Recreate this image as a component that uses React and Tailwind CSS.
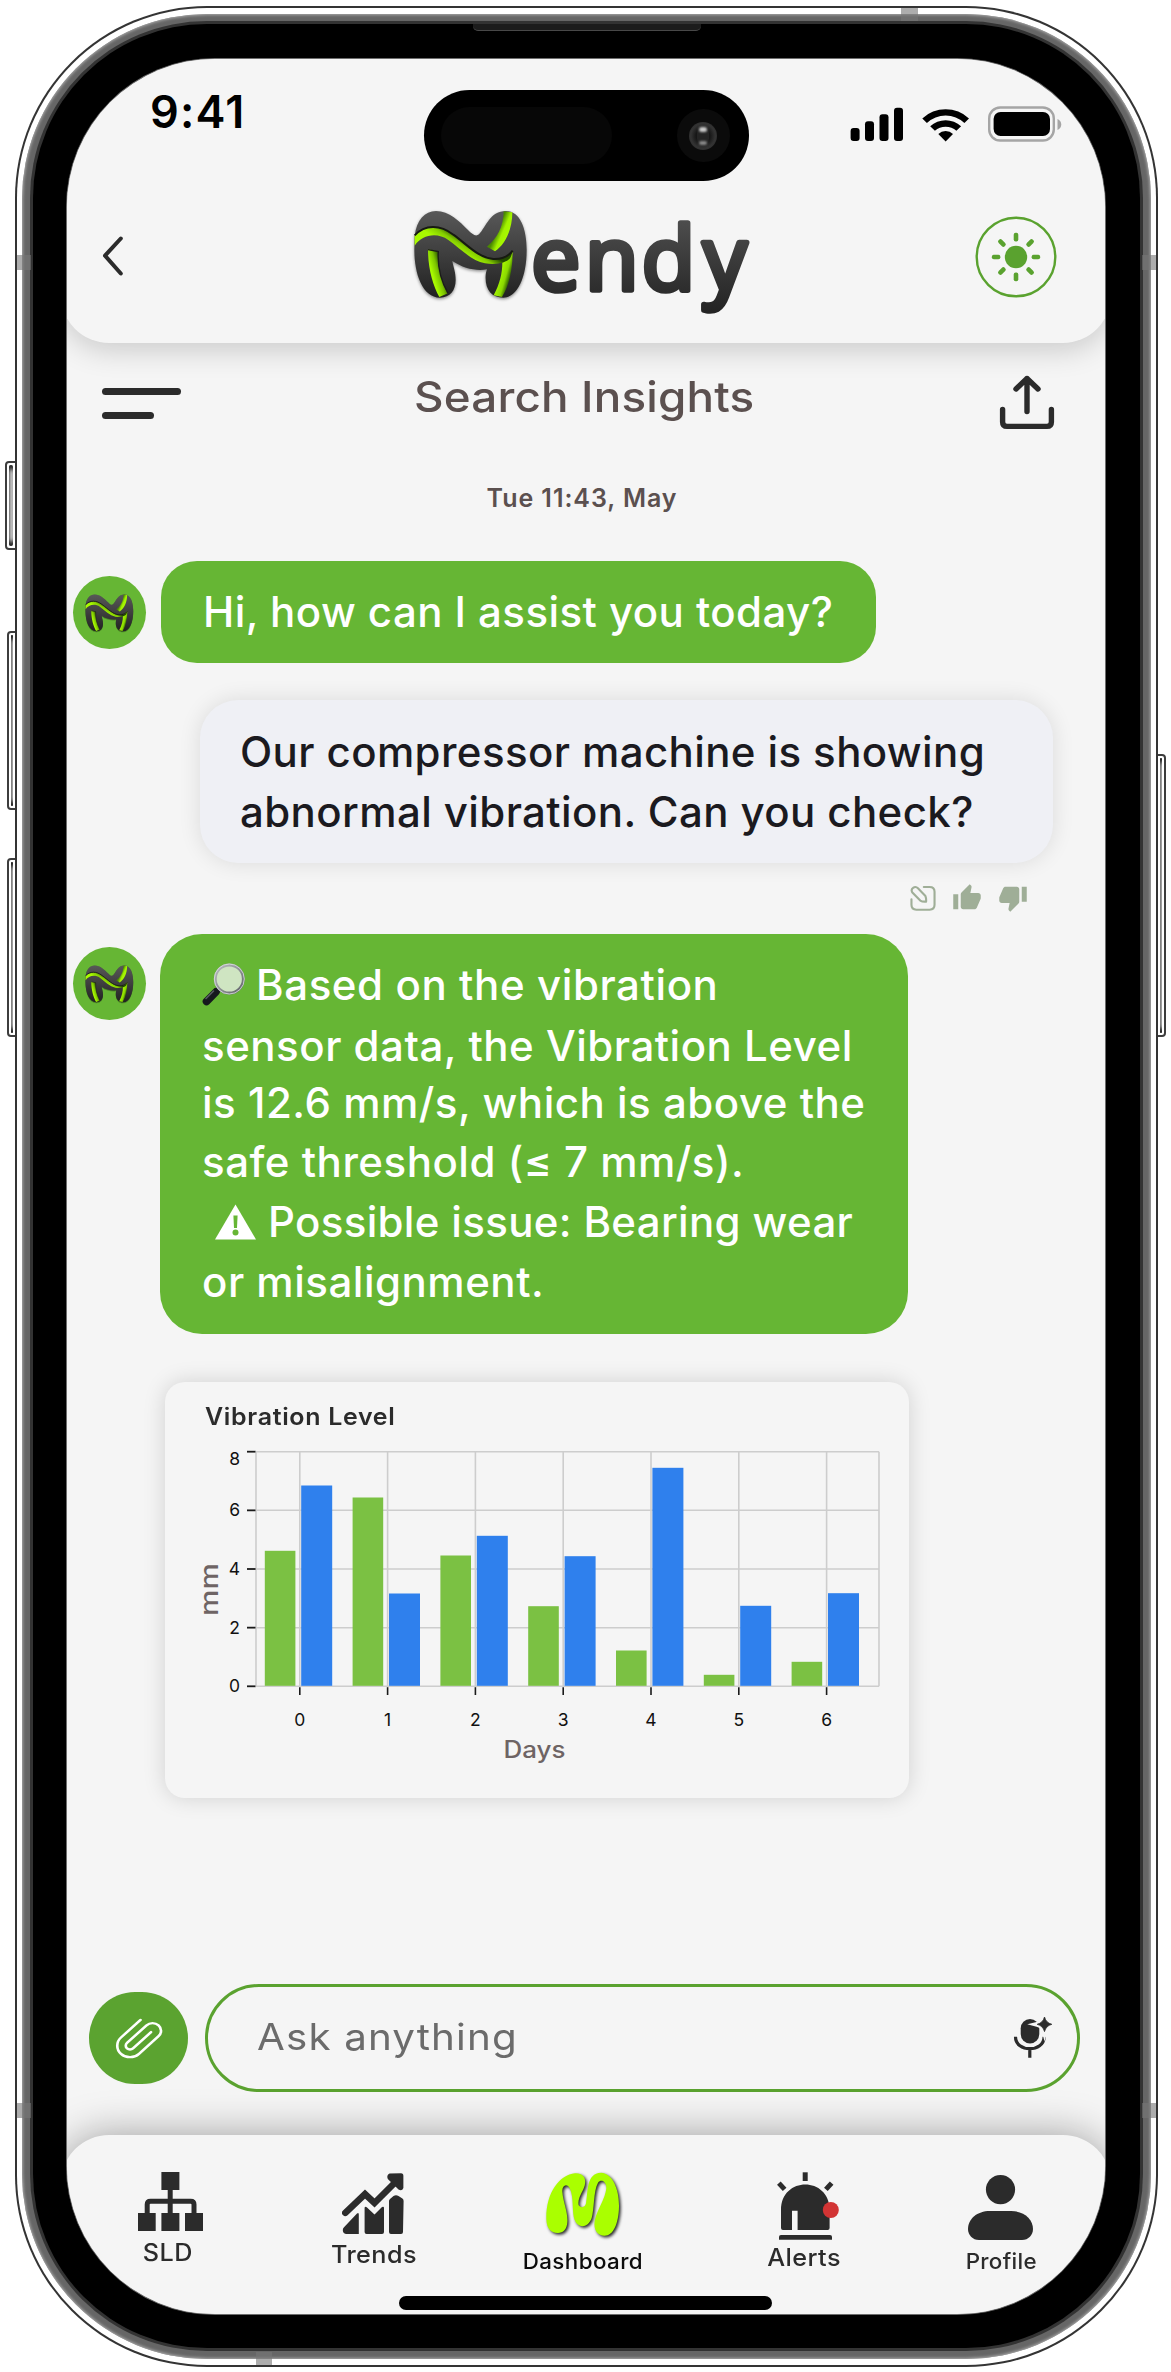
import React from "react";
import { MdThumbUp, MdThumbDown } from "react-icons/md";

const GRAPHITE = "#2b2b2b";

/* The letter M of the wordmark, also used alone as the assistant avatar. */
function LogoM({ id }) {
  return (
    <g>
      <defs>
        <linearGradient id={id + "-body"} x1="0" y1="0" x2="0" y2="1">
          <stop offset="0" stopColor="#585858" />
          <stop offset="0.5" stopColor="#3e3e3e" />
          <stop offset="1" stopColor="#212121" />
        </linearGradient>
        <linearGradient id={id + "-wave"} gradientUnits="userSpaceOnUse" x1="190" y1="110" x2="165" y2="150">
          <stop offset="0" stopColor="#234a00" />
          <stop offset="0.5" stopColor="#84cc00" />
          <stop offset="1" stopColor="#a8fa00" />
        </linearGradient>
        <linearGradient id={id + "-stem"} gradientUnits="userSpaceOnUse" x1="88" y1="225" x2="132" y2="212">
          <stop offset="0.2" stopColor="#a8fa00" />
          <stop offset="0.6" stopColor="#7cc400" />
          <stop offset="1" stopColor="#234a00" />
        </linearGradient>
        <linearGradient id={id + "-right"} gradientUnits="userSpaceOnUse" x1="296" y1="225" x2="330" y2="235">
          <stop offset="0" stopColor="#a8fa00" />
          <stop offset="0.6" stopColor="#8ad800" />
          <stop offset="1" stopColor="#2c5a00" />
        </linearGradient>
        <linearGradient id={id + "-top"} gradientUnits="userSpaceOnUse" x1="296" y1="82" x2="328" y2="96">
          <stop offset="0" stopColor="#4a8a00" />
          <stop offset="0.5" stopColor="#a2f200" />
          <stop offset="1" stopColor="#a8fa00" />
        </linearGradient>
      </defs>
      <path
        d="M44 108C50 60 74 33 108 33C148 33 178 64 204 90C217 103 227 111 237 103C259 80 270 33 318 33C362 33 380 90 380 150C380 232 352 293 310 293C274 293 254 268 257 225C258 217 260 211 261 208C228 214 190 205 157 183C160 200 167 217 167 240C167 271 150 293 120 293C68 293 43 222 43 150Z"
        fill={`url(#${id}-body)`}
        className="drop-shadow-[0_4px_5px_rgba(0,0,0,0.45)]"
      />
      <path d="M84 148L115 154C112 200 124 244 144 280L118 291C98 255 84 205 84 148Z" fill={`url(#${id}-stem)`} />
      <path d="M84 149L115 155C112 200 124 244 144 280" fill="none" stroke="#1b1b1b" strokeWidth="4" />
      <path d="M311 34L337 37C337 90 315 133 285 154L261 140C292 114 310 80 311 34Z" fill={`url(#${id}-top)`} />
      <path d="M338 152C338 204 330 252 306 291L281 286C300 250 308 218 307 180Z" fill={`url(#${id}-right)`} />
      <path d="M44 108C75 74 120 74 160 105C205 138 235 174 280 178C305 179 325 170 338 153C336 160 334 168 330 175C318 189 288 196 255 190C215 183 180 145 145 120C110 95 65 105 44 137Z" fill={`url(#${id}-wave)`} />
      <path d="M44 106C75 73 120 73 160 104C205 137 235 173 280 177C305 178 325 170 338 152" fill="none" stroke="#171a12" strokeWidth="6" />
    </g>
  );
}

function Wordmark() {
  return (
    <svg width="370" height="125" viewBox="0 0 1110 375" className="ml-[276px] shrink-0 overflow-visible">
      <defs>
        <linearGradient id="word" gradientUnits="userSpaceOnUse" x1="0" y1="60" x2="0" y2="345">
          <stop offset="0" stopColor="#4d4d4d" />
          <stop offset="1" stopColor="#222222" />
        </linearGradient>
      </defs>
      <LogoM id="brand" />
      <text
        x="394 555 725 909"
        y="271"
        fontFamily="'Open Sans', sans-serif"
        fontSize="262"
        fontWeight="400"
        fill="url(#word)"
        stroke="url(#word)"
        strokeWidth="16.5"
        strokeLinejoin="round"
      >
        endy
      </text>
    </svg>
  );
}

function Avatar({ id, className }) {
  return (
    <div className={"flex size-[73px] shrink-0 items-center justify-center rounded-full bg-[#66b634] " + className}>
      <svg width="49" height="38" viewBox="40 30 345 268" className="overflow-visible">
        <LogoM id={id} />
      </svg>
    </div>
  );
}

function StatusIcons() {
  return (
    <svg width="212" height="37" viewBox="850 106 212 37" className="absolute right-[49px] top-[47px]">
      <rect x="850.6" y="128" width="9" height="13" rx="3" />
      <rect x="865" y="121.3" width="9" height="19.7" rx="3" />
      <rect x="879.5" y="114.3" width="9" height="26.7" rx="3" />
      <rect x="894" y="107.7" width="9" height="33.3" rx="3" />
      <path d="M922.3 118.5A34 34 0 0 1 969 118.5L964.4 123A27.5 27.5 0 0 0 926.9 123Z" />
      <path d="M930.2 126.2A23 23 0 0 1 961.1 126.2L956.4 130.8A16 16 0 0 0 934.9 130.8Z" />
      <path d="M938.3 133.9A10.5 10.5 0 0 1 953 133.9L945.65 141.4Z" />
      <rect x="989.2" y="107.5" width="64.6" height="33" rx="11" fill="none" stroke="#a5a5a5" strokeWidth="2.4" />
      <rect x="993.6" y="112" width="56.4" height="24" rx="7" />
      <path d="M1057.5 119C1062.5 121 1062.5 128 1057.5 130Z" fill="#a5a5a5" />
    </svg>
  );
}

function Island() {
  return (
    <div className="mx-auto flex h-[91px] w-[325px] items-center rounded-full bg-black">
      <div className="ml-[17px] h-[57px] w-[171px] rounded-full bg-[#070707]" />
      <div className="ml-[65px] flex size-[53px] items-center justify-center rounded-full bg-[#0b0b0b]">
        <div className="flex size-[28px] items-center justify-center rounded-full bg-[radial-gradient(circle,#161616_35%,#333333_62%,#1e1e1e_100%)]">
          <div className="flex h-[18px] w-[12px] flex-col items-center justify-between rounded-full bg-[#232323]">
            <span className="h-[5px] w-[8px] rounded-full bg-[#c9c9c9] blur-[1px]" />
            <span className="h-[4px] w-[8px] rounded-full bg-[#8a8a8a] blur-[1px]" />
          </div>
        </div>
      </div>
    </div>
  );
}

function Sun() {
  return (
    <svg width="82" height="82" viewBox="0 0 82 82" className="ml-auto mt-[16px] shrink-0">
      <circle cx="41" cy="41" r="39.3" fill="none" stroke="#5aa22f" strokeWidth="2.4" />
      <circle cx="41" cy="41" r="11.2" fill="#5aa22f" />
      {[0, 45, 90, 135, 180, 225, 270, 315].map((a) => (
        <rect key={a} x="38.7" y="16.8" width="4.6" height="8.6" rx="2" fill="#5aa22f" transform={`rotate(${a} 41 41)`} />
      ))}
    </svg>
  );
}

function Header() {
  return (
    <header className="relative z-10 -mx-[6px] h-[284px] shrink-0 rounded-b-[48px] bg-[#f5f5f5] pt-[31px] shadow-[0_6px_30px_rgba(0,0,0,0.19)]">
      <Island />
      <span className="absolute left-[89px] top-[26px] text-[45px] font-semibold leading-[54px] tracking-[1.2px] text-black">9:41</span>
      <StatusIcons />
      <div className="mt-[19px] flex h-[125px] items-start pl-[41px] pr-[54px]">
        <svg width="21" height="40" viewBox="0 0 21 40" className="mr-px mt-[36px] shrink-0">
          <path d="M18.8 2.5L3 19.7L18.8 37.5" fill="none" stroke={GRAPHITE} strokeWidth="4" strokeLinecap="round" strokeLinejoin="round" />
        </svg>
        <Wordmark />
        <Sun />
      </div>
    </header>
  );
}

function SubHeader() {
  return (
    <div className="flex h-[100px] shrink-0 items-start pl-[35px] pr-[50px]">
      <div className="mt-[45px] flex w-[79px] shrink-0 flex-col gap-[17px]">
        <span className="h-[7px] w-[79px] rounded-full bg-[#2b2b2b]" />
        <span className="h-[7px] w-[52px] rounded-full bg-[#2b2b2b]" />
      </div>
      <h1 className="ml-[233px] mt-[24px] origin-left scale-x-[1.09] whitespace-nowrap text-[42px] font-[550] leading-[60px] tracking-[0.15px] text-[#5b504f]">
        Search Insights
      </h1>
      <svg width="56" height="56" viewBox="0 0 56 56" className="ml-auto mt-[31px] shrink-0" fill="none" stroke={GRAPHITE} strokeWidth="5.4" strokeLinecap="round" strokeLinejoin="round">
        <path d="M28 37.5V4.5M17 15L28 4.5L39 15" />
        <path d="M3.6 35.5V48Q3.6 52.4 8 52.4H48Q52.4 52.4 52.4 48V35.5" />
      </svg>
    </div>
  );
}

function Magnifier() {
  return (
    <svg width="43" height="44" viewBox="0 0 43 44" className="mr-[11px] inline-block shrink-0">
      <defs>
        <linearGradient id="rim" x1="0" y1="0" x2="1" y2="1">
          <stop offset="0" stopColor="#b9bcc0" />
          <stop offset="0.5" stopColor="#8f9296" />
          <stop offset="1" stopColor="#5d6065" />
        </linearGradient>
      </defs>
      <path d="M14 29L17.5 25.5" stroke="#9a9ca0" strokeWidth="4" />
      <path d="M4.5 38.5L14 28.8" stroke="#16191d" strokeWidth="7.6" strokeLinecap="round" />
      <path d="M4 35.5L11.5 28" stroke="#565b62" strokeWidth="1.6" strokeLinecap="round" />
      <circle cx="27.3" cy="16" r="14" fill="#cfe5c2" stroke="url(#rim)" strokeWidth="2.8" />
      <circle cx="27.3" cy="16" r="15" fill="none" stroke="#dfe2e6" strokeWidth="0.8" />
    </svg>
  );
}

function Warning() {
  return (
    <svg width="41" height="36" viewBox="0 0 41 36" className="ml-[13px] mr-[12px] inline-block shrink-0">
      <path d="M20.5 0.5L41 35.5H0Z" fill="#fff" />
      <path d="M18.4 11.5H22.6L22 24H19Z" fill="#66b634" />
      <circle cx="20.5" cy="28.6" r="3" fill="#66b634" />
    </svg>
  );
}

function EditIcon() {
  return (
    <svg width="26" height="26" viewBox="46 44 79 80" fill="none" stroke="#9fae97" strokeWidth="6.5" strokeLinecap="round" strokeLinejoin="round">
      <path d="M88 50H106Q121 50 121 65V105Q121 120 106 120H65Q50 120 50 105V88" />
      <path d="M52 66Q48 58 55 53Q63 47 70 54L93 78Q96 86 95 95Q84 96 77 92Z" />
    </svg>
  );
}

const SERIES = [
  [135.0, 200.3],
  [188.3, 92.3],
  [130.3, 150.0],
  [79.6, 129.6],
  [35.3, 218.0],
  [11.0, 80.0],
  [24.0, 92.6],
];
const AXIS = 1686.3;

function Chart() {
  return (
    <section className="ml-[98px] mt-[48px] h-[416px] w-[744px] shrink-0 rounded-[20px] bg-[#f5f5f5] pt-[20px] shadow-[0_0_22px_rgba(0,0,0,0.15)]">
      <h2 className="ml-[40px] w-max origin-left scale-x-[1.04] text-[24px] font-semibold leading-[30px] tracking-[0.65px] text-[#2b2b2b]">Vibration Level</h2>
      <svg width="744" height="366" viewBox="165 1432 744 366" fontFamily="Inter, sans-serif">
        <g stroke="#cdcdcd" strokeWidth="1.6" fill="none">
          {[1451.7, 1510.3, 1569, 1627.7, AXIS].map((y) => (
            <path key={y} d={`M256 ${y}H879`} />
          ))}
          <path d="M256 1451.7V1686.3M879 1451.7V1686.3" />
          {SERIES.map((_, i) => (
            <path key={i} d={`M${299.8 + i * 87.8} 1451.7V1686.3`} />
          ))}
        </g>
        {[8, 6, 4, 2, 0].map((n, i) => (
          <g key={n}>
            <path d={`M247 ${1451.7 + i * 58.65}H255.5`} stroke="#1a1a1a" strokeWidth="1.8" />
            <text x="240" y={i === 0 ? 1464.5 : 1457.8 + i * 58.65} textAnchor="end" fontSize="17.5" fill="#111">{n}</text>
          </g>
        ))}
        {SERIES.map(([a, b], i) => {
          const x = 299.8 + i * 87.8;
          return (
            <g key={i}>
              <rect x={x - 35} y={AXIS - a - 0.5} width="30.6" height={a} fill="#7bc143" />
              <rect x={x + 1.4} y={AXIS - b - 0.5} width="31" height={b} fill="#2f80ed" />
              <path d={`M${x} 1687.2V1695`} stroke="#1a1a1a" strokeWidth="1.6" />
              <text x={x} y="1725.8" textAnchor="middle" fontSize="17.5" fill="#111">{i}</text>
            </g>
          );
        })}
        <text x="503.5" y="1758" fontSize="24" fontWeight="550" fill="#6e6464" textLength="62" lengthAdjust="spacingAndGlyphs">Days</text>
        <text transform="translate(217.5 1616) rotate(-90)" fontSize="25" fontWeight="550" fill="#6e6464" textLength="53" lengthAdjust="spacingAndGlyphs">mm</text>
      </svg>
    </section>
  );
}

function Composer() {
  return (
    <div className="mt-[186px] flex h-[108px] shrink-0 items-center pl-[22px]">
      <button className="flex h-[92px] w-[99px] shrink-0 items-center justify-center rounded-[46px] bg-[#5ba330]">
        <svg width="51" height="46" viewBox="0 0 24 24" preserveAspectRatio="none" fill="none" stroke="#fff" strokeWidth="1.25" strokeLinecap="round" strokeLinejoin="round">
          <path transform="matrix(0 -1 -1 0 24 24)" d="M21.44 11.05l-9.19 9.19a6 6 0 0 1-8.49-8.49l9.19-9.19a4 4 0 0 1 5.66 5.66l-9.2 9.19a2 2 0 0 1-2.83-2.83l8.49-8.48" />
        </svg>
      </button>
      <div className="ml-[17px] flex h-[108px] w-[875px] shrink-0 items-center justify-between rounded-full border-[3.5px] border-[#5aa22f] pl-[49px] pr-[24px]">
        <span className="origin-left scale-x-[1.09] whitespace-nowrap pb-[2px] text-[37px] leading-[50px] tracking-[1.05px] text-[#6b6b6b]">Ask anything</span>
        <svg width="40" height="44" viewBox="1012.5 2018 40 44" fill={GRAPHITE}>
          <rect x="1020.2" y="2021" width="18.6" height="24.4" rx="9.3" />
          <path d="M1015 2038.7C1015 2054.7 1043.6 2054.7 1043.6 2038.7M1029.3 2051V2059.8" fill="none" stroke={GRAPHITE} strokeWidth="3.2" />
          <path d="M1044 2019Q1045.5 2024.8 1051.3 2026.3Q1045.5 2027.8 1044 2033.6Q1042.5 2027.8 1036.7 2026.3Q1042.5 2024.8 1044 2019Z" stroke="#f5f5f5" strokeWidth="5" />
          <path d="M1044 2019Q1045.5 2024.8 1051.3 2026.3Q1045.5 2027.8 1044 2033.6Q1042.5 2027.8 1036.7 2026.3Q1042.5 2024.8 1044 2019Z" stroke={GRAPHITE} strokeWidth="0.8" />
        </svg>
      </div>
    </div>
  );
}

function NavBar() {
  return (
    <nav className="relative z-10 -mx-[6px] mt-[43px] flex h-[179px] shrink-0 items-start rounded-t-[48px] bg-[#f5f5f5] text-[#2b2b2b] shadow-[0_0_42px_rgba(0,0,0,0.36)]">
      <div className="ml-[42px] flex w-[130px] shrink-0 flex-col items-center pt-[37px]">
        <svg width="65" height="59" viewBox="137.3 2172 65 59" fill={GRAPHITE} className="ml-[4px]">
          <path d="M160.7 2172H178.7V2190H160.7ZM137.3 2213H155V2231H137.3ZM160.7 2213H178.7V2231H160.7ZM184.3 2213H202.3V2231H184.3Z" />
          <path d="M169.5 2190V2213M146.5 2213V2204.5Q146.5 2201.2 149.8 2201.2H190Q193.3 2201.2 193.3 2204.5V2213" fill="none" stroke={GRAPHITE} strokeWidth="5" />
        </svg>
        <span className="mt-[7px] scale-x-[1.05] text-[24px] font-medium leading-[30px] tracking-[0.4px]">SLD</span>
      </div>
      <div className="ml-[76px] flex w-[130px] shrink-0 flex-col items-center pt-[38px]">
        <svg width="62" height="61" viewBox="342 2173 62 61" fill={GRAPHITE} className="mr-[2px]">
          <path d="M345.3 2212.8L365 2194L374.5 2203L397 2180.5" fill="none" stroke={GRAPHITE} strokeWidth="6.6" strokeLinecap="round" />
          <path d="M389.5 2173.5L401 2173.3Q403.4 2173.3 403.4 2176V2188Q402 2191.5 398.5 2189.5L387.8 2179Q386.2 2175 389.5 2173.5Z" />
          <path d="M342.8 2230Q342.8 2228.5 344 2227.3L357 2213.5Q358.8 2212 358.8 2214.5V2234H346Q342.8 2233.5 342.8 2230Z" />
          <path d="M364.6 2207.5Q365.5 2206 367 2207.5L374.5 2214.5L382 2207Q384 2206 384 2208V2232Q384 2234 382 2234H366.6Q364.6 2234 364.6 2232Z" />
          <path d="M389 2201Q389 2199.8 390 2198.9L393.5 2196Q396 2194.5 398.5 2196L402.4 2198.6Q403.6 2199.6 403.6 2201L403 2232Q403 2234 401 2234H391Q389 2234 389 2232Z" />
        </svg>
        <span className="mt-[6px] scale-x-[1.05] text-[24px] font-medium leading-[30px] tracking-[0.4px]">Trends</span>
      </div>
      <div className="ml-[79px] flex w-[130px] shrink-0 flex-col items-center pt-[25px]">
        <svg width="110" height="90" viewBox="0 0 330 270" className="ml-[4px] shrink-0">
          <path
            className="drop-shadow-[5px_5px_4px_rgba(0,0,0,0.85)]"
            d="M49 178C47 100 88 44 135 40C165 38 172 62 160 88C148 110 143 125 146 136C151 144 165 144 168 130C174 100 168 38 213 38C250 40 268 92 267 140C266 190 250 227 224 227C199 227 189 205 195 178C204 145 225 118 229 85C230 64 213 55 204 68C190 92 193 150 185 174C174 205 144 206 134 180C125 155 132 112 120 86C112 68 95 74 97 96C99 126 114 155 112 186C111 208 99 219 84 219C60 219 50 203 49 178Z"
            fill="#aaff00"
          />
        </svg>
        <span className="-mt-[4px] scale-x-[1.04] text-[21.5px] font-medium leading-[30px] tracking-[0.4px] text-[#0c0c0c]">Dashboard</span>
      </div>
      <div className="ml-[91px] flex w-[130px] shrink-0 flex-col items-center pt-[35px]">
        <svg width="64" height="72" viewBox="777 2170 64 72" fill={GRAPHITE} className="ml-[10px]">
          <path d="M802.7 2172.3H807.7V2181H802.7Z" />
          <rect x="779.3" y="2182" width="4.9" height="8.6" transform="rotate(-42 781.7 2186.3)" />
          <rect x="826.3" y="2182" width="4.9" height="8.6" transform="rotate(42 828.8 2186.3)" />
          <path d="M781 2210C781 2176 829.6 2176 829.6 2210V2228Q829.6 2230 827.6 2230H797.6V2210.7H792V2230H783Q781 2230 781 2228Z" />
          <path d="M779 2237Q779 2235 781 2235H830Q832 2235 832 2237V2239.7H779Z" />
          <circle cx="830.8" cy="2210" r="8" fill="#d23434" />
        </svg>
        <span className="mt-px scale-x-[1.05] text-[24px] font-medium leading-[30px] tracking-[0.4px]">Alerts</span>
      </div>
      <div className="ml-[67px] flex w-[130px] shrink-0 flex-col items-center pt-[40px]">
        <svg width="65" height="65" viewBox="0 0 65 65" fill={GRAPHITE} className="mr-[2px]">
          <circle cx="32.5" cy="14.6" r="14.6" />
          <path d="M22 36H43C56 36 65 44 65 54C65 60 60.5 65 54 65H11C4.5 65 0 60 0 54C0 44 9 36 22 36Z" />
        </svg>
        <span className="mt-[6px] scale-x-[1.04] text-[21.5px] font-medium leading-[30px] tracking-[0.3px]">Profile</span>
      </div>
      <span className="absolute bottom-[4px] left-[338px] h-[14px] w-[373px] rounded-full bg-black" />
    </nav>
  );
}

function SideButton({ className }) {
  return (
    <span className={"absolute border-2 border-[#3d3d3d] bg-white p-[2px] " + className}>
      <span className="block size-full rounded-[2px] bg-[linear-gradient(90deg,#9a9a9a,#efefef)] shadow-[inset_0_6px_4px_-2px_#222,inset_0_-6px_4px_-2px_#222]" />
    </span>
  );
}

export default function App() {
  return (
    <div className="relative h-[2372px] w-[1171px] overflow-hidden bg-white pl-[15px] pt-[6px] font-['Inter',sans-serif]">
      <SideButton className="left-[5px] top-[461px] h-[89px] w-[12px] rounded-l-[4px]" />
      <SideButton className="left-[7px] top-[631px] h-[179px] w-[10px] rounded-l-[4px]" />
      <SideButton className="left-[7px] top-[858px] h-[179px] w-[10px] rounded-l-[4px]" />
      <SideButton className="left-[1156px] top-[754px] h-[283px] w-[10px] rounded-r-[4px]" />

      <div className="relative h-[2361px] w-[1143px] rounded-[192px] bg-[#343434] p-[2px]">
        <div className="h-full rounded-[190px] bg-white px-[5px] py-[6px]">
          <div className="h-full rounded-[185px] bg-[#666666] px-[11px] pb-[11px] pt-[10px] shadow-[inset_0_0_3px_1px_#a9a9a9]">
            <div className="relative h-full rounded-[174px] bg-black pb-[34px] pl-[34px] pr-[35px] pt-[35px] shadow-[0_0_0_3px_#333333]">
              <span className="absolute left-[440px] top-0 h-[7px] w-[228px] rounded-b-[5px] border-b border-[#484848] bg-[#1c1c1c]" />
              <main className="flex h-[2255px] w-[1038px] flex-col overflow-hidden rounded-[148px] bg-[#f5f5f5] shadow-[0_0_0_1px_#6d6d6d]">
                <Header />
                <SubHeader />
                <p className="mt-[37px] shrink-0 pr-[8px] text-center text-[25px] font-semibold leading-[36px] tracking-[0.95px] text-[#5b504f]">Tue 11:43, May</p>

                <div className="mt-[45px] flex shrink-0 pl-[6px] text-[42px] font-medium leading-[60px] tracking-[0.44px] text-white">
                  <Avatar id="first" className="mt-[15px]" />
                  <p className="ml-[15px] h-[102px] w-[715px] whitespace-nowrap rounded-[36px] bg-[#66b634] pl-[42px] pt-[21px]">Hi, how can I assist you today?</p>
                </div>

                <p className="ml-[133px] mt-[37px] h-[163px] w-[853px] shrink-0 whitespace-nowrap rounded-[38px] bg-[#eff0f5] pl-[40px] pt-[22px] text-[42px] font-medium leading-[60px] tracking-[0.4px] text-[#1b1a1f] shadow-[0_0_22px_rgba(0,0,0,0.11)]">
                  Our compressor machine is showing
                  <br />
                  abnormal vibration. Can you check?
                </p>

                <div className="mt-[21px] flex h-[28px] shrink-0 items-center justify-end pr-[77px] text-[30px] text-[#9fae97]">
                  <EditIcon />
                  <MdThumbUp className="ml-[16px]" />
                  <MdThumbDown className="ml-[16px]" />
                </div>

                <div className="mt-[22px] flex shrink-0 pl-[6px] text-[42px] font-medium leading-[60px] tracking-[0.52px] text-white">
                  <Avatar id="second" className="mt-[13px]" />
                  <div className="ml-[14px] h-[400px] w-[748px] whitespace-nowrap rounded-[42px] bg-[#66b634] pl-[42px] pt-[21px]">
                    <p className="flex items-center tracking-[0.6px]">
                      <Magnifier />
                      <span>Based on the vibration</span>
                    </p>
                    <p className="mt-px">sensor data, the Vibration Level</p>
                    <p className="-mt-[3px]">is 12.6 mm/s, which is above the</p>
                    <p className="-mt-px">safe threshold (≤ 7 mm/s).</p>
                    <p className="flex items-center tracking-[0.34px]">
                      <Warning />
                      <span>Possible issue: Bearing wear</span>
                    </p>
                    <p>or misalignment.</p>
                  </div>
                </div>

                <Chart />
                <Composer />
                <NavBar />
              </main>
            </div>
          </div>
        </div>
        <span className="absolute left-[2px] top-[249px] h-[15px] w-[14px] bg-[#777]/60" />
        <span className="absolute right-[2px] top-[249px] h-[15px] w-[14px] bg-[#777]/60" />
        <span className="absolute left-[2px] top-[2097px] h-[15px] w-[14px] bg-[#777]/60" />
        <span className="absolute right-[2px] top-[2097px] h-[15px] w-[14px] bg-[#777]/60" />
        <span className="absolute left-[886px] top-[2px] h-[13px] w-[17px] bg-[#777]/60" />
        <span className="absolute bottom-[2px] left-[241px] h-[13px] w-[16px] bg-[#777]/60" />
      </div>
    </div>
  );
}
